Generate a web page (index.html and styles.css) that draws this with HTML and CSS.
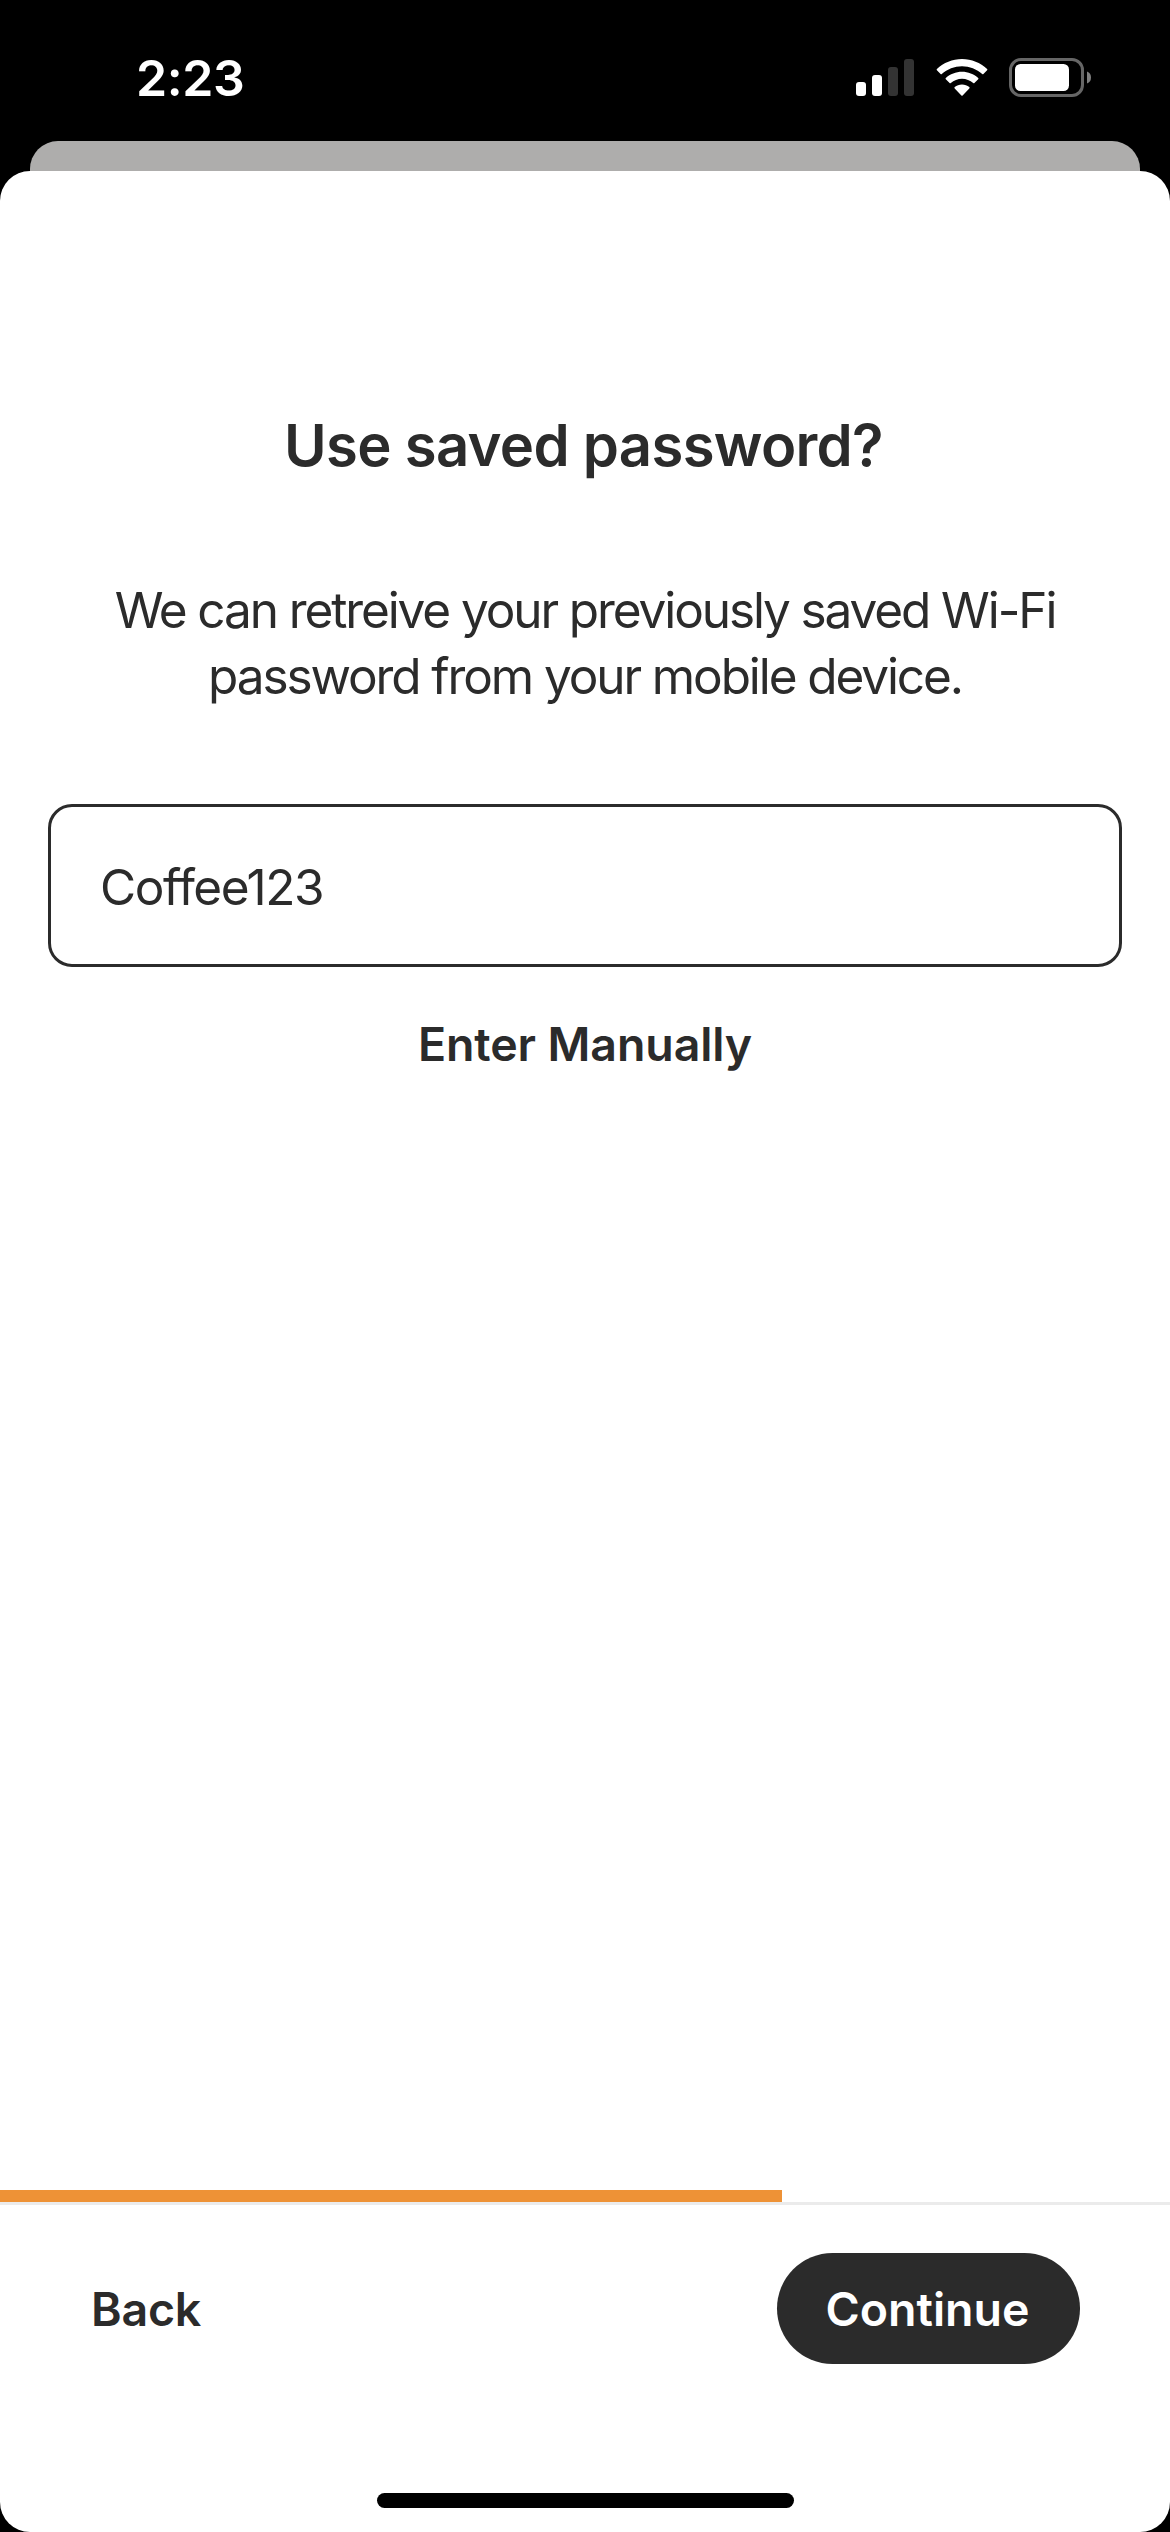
FILE: index.html
```html
<!DOCTYPE html>
<html lang="en">
<head>
<meta charset="utf-8">
<title>Use saved password?</title>
<link rel="stylesheet" href="styles.css">
</head>
<body>
<div class="screen">
  <header class="status">
    <time class="clock">2:23</time>
    <div class="indicators">
      <svg class="signal" width="58" height="38" viewBox="0 0 58 38" fill="#fff">
        <rect x="0" y="23" width="10" height="14" rx="3"/>
        <rect x="16" y="16" width="10" height="21" rx="3"/>
        <g fill="#333"><rect x="32" y="8" width="10" height="29" rx="3"/><rect x="48" y="0" width="10" height="37" rx="3"/></g>
      </svg>
      <svg class="wifi" width="52" height="38" viewBox="0 0 52 38" fill="#fff">
        <path d="M26 0C16.500 0 7.500 3.700 .9 10q-.6.6 0 1.200L4.600 15q.6.600 1.200 0C11.300 10 18.400 7.200 26 7.200S40.700 10 46.200 15q.6.600 1.200 0L51.100 11.200q.6-.6 0-1.200C44.500 3.700 35.500 0 26 0Z"/>
        <path d="M26 12.800C19.900 12.800 14.200 15.100 9.800 19q-.6.600 0 1.200L13.600 24q.6.600 1.200 0C17.900 21.400 21.800 19.800 26 19.800S34.100 21.400 37.200 24q.6.600 1.200 0L42.200 20.200q.6-.6 0-1.200C37.800 15.100 32.100 12.800 26 12.800Z"/>
        <path d="M26 25.600C23.200 25.600 20.700 26.500 18.700 28.100q-.7.600 0 1.300L25.400 36.500q.6.600 1.200 0L33.300 29.400q.7-.7 0-1.300C31.300 26.500 28.800 25.600 26 25.600Z"/>
      </svg>
      <svg class="battery" width="83" height="40" viewBox="0 0 83 40">
        <rect x="1.500" y="1.500" width="72" height="36" rx="10.500" fill="none" stroke="#666" stroke-width="3"/>
        <rect x="6" y="6" width="54" height="27" rx="5.500" fill="#fff"/>
        <path d="M78 13.500q4 1.500 4 6t-4 6Z" fill="#808080"/>
      </svg>
    </div>
  </header>
  <div class="card-behind"></div>
  <main class="sheet">
    <section class="content">
      <h1 class="title">Use saved password?</h1>
      <p class="message">We can retreive your previously saved Wi-Fi<br>password from your mobile device.</p>
      <div class="field">Coffee123</div>
      <button class="manual">Enter Manually</button>
    </section>
    <div class="progress"><div class="progress-bar" style="width: 782px"></div></div>
    <nav class="actions">
      <button class="back">Back</button>
      <button class="continue">Continue</button>
    </nav>
    <div class="home-indicator"></div>
  </main>
</div>
</body>
</html>
```
FILE: styles.css
```css
* { box-sizing: border-box; }

body {
  margin: 0;
  background: #000;
  color: #2b2b2b;
  font-family: Inter, "Liberation Sans", sans-serif;
}

button {
  margin: 0;
  padding: 0;
  border: 0;
  background: none;
  color: inherit;
  font: 600 46.5px/60px Inter, "Liberation Sans", sans-serif;
}

svg { display: block; }

.screen {
  display: flex;
  flex-direction: column;
  width: 1170px;
  height: 2532px;
  overflow: hidden;
}

.status {
  display: flex;
  justify-content: space-between;
  height: 141px;
  padding: 0 78px 0 136px;
}

.clock {
  padding-top: 48px;
  color: #fff;
  font-size: 50px;
  font-weight: 600;
  line-height: 60px;
  letter-spacing: -0.4px;
}

.indicators {
  display: flex;
  align-items: flex-start;
}

.signal { margin: 59px 22px 0 0; }
.wifi { margin: 59px 21px 0 0; }
.battery { margin-top: 58px; }

.card-behind {
  height: 30px;
  margin: 0 30px;
  border-radius: 28px 28px 0 0;
  background: #aeadac;
}

.sheet {
  display: flex;
  flex: 1;
  flex-direction: column;
  border-radius: 30px;
  background: #fff;
}

.content {
  display: flex;
  flex: 1;
  flex-direction: column;
  align-items: center;
  padding: 238px 48px 0;
}

.title {
  margin: 0;
  padding-right: 3px;
  font-size: 58px;
  font-weight: 600;
  line-height: 72px;
  letter-spacing: -0.7px;
}

.message {
  margin: 96px 0 95px;
  font-size: 49.5px;
  line-height: 66px;
  letter-spacing: -2.1px;
  text-align: center;
}

.field {
  display: flex;
  align-items: center;
  align-self: stretch;
  height: 163px;
  padding: 2px 49px 0;
  border: 3px solid #2b2b2b;
  border-radius: 24px;
  font-size: 49.5px;
  letter-spacing: -1.44px;
}

.manual {
  margin-top: 47px;
  letter-spacing: -0.1px;
}

.progress {
  height: 15px;
  border-bottom: 3px solid #ebebeb;
}

.progress-bar {
  height: 12px;
  background: #ee9236;
}

.actions {
  display: flex;
  align-items: center;
  justify-content: space-between;
  height: 111px;
  margin-top: 48px;
  padding: 0 90px 0 91px;
}

.back {
  padding-top: 1px;
  letter-spacing: -0.2px;
}

.continue {
  width: 303px;
  height: 111px;
  padding: 1px 2px 0 0;
  border-radius: 56px;
  background: #2b2b2b;
  color: #fff;
}

.home-indicator {
  width: 417px;
  height: 15px;
  margin: 129px 0 24px 377px;
  border-radius: 8px;
  background: #000;
}
```
